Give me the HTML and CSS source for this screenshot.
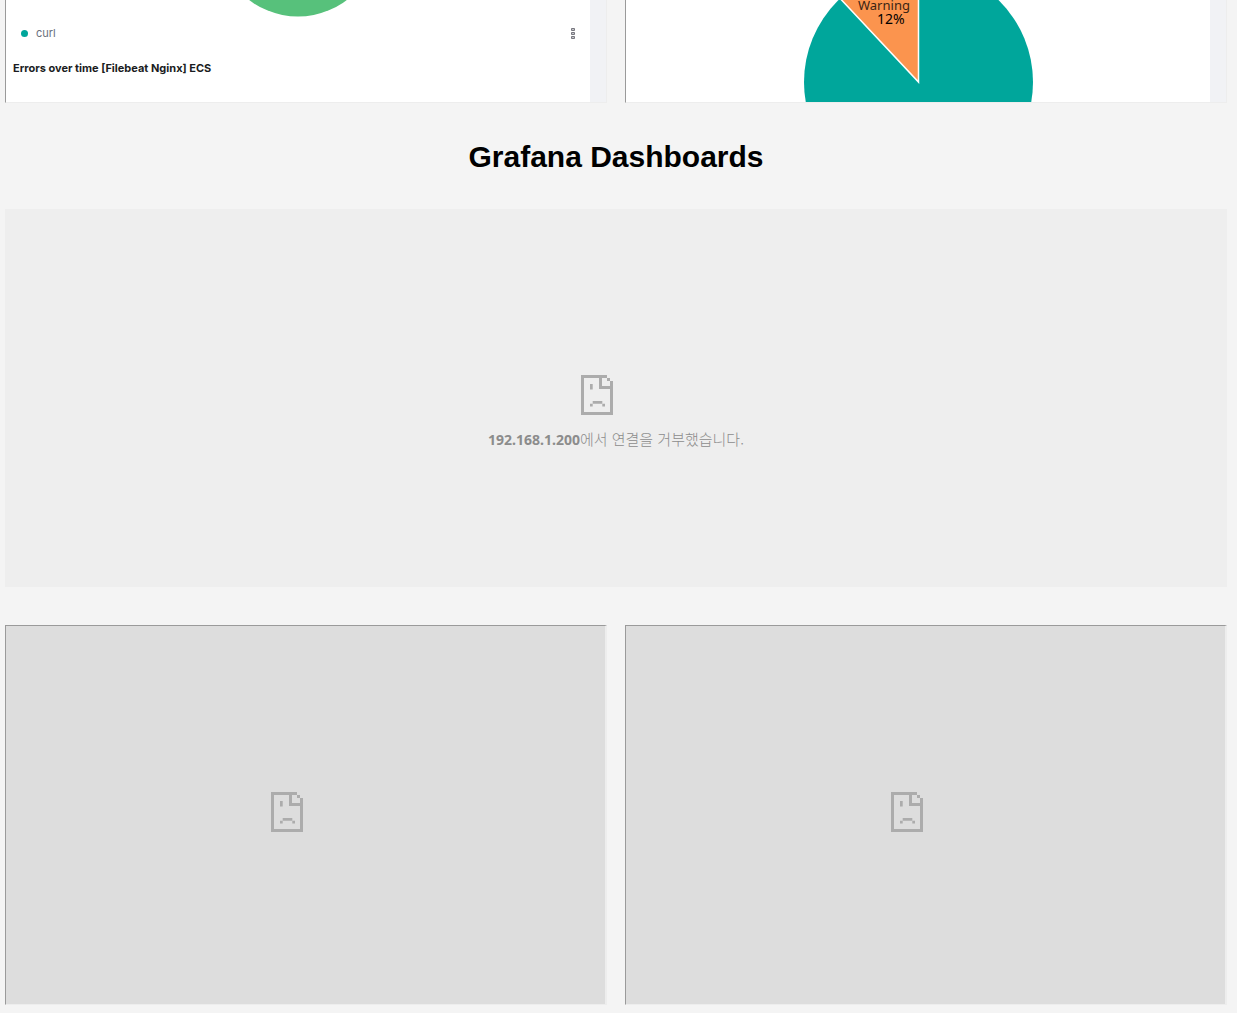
FILE: index.html
```html
<!DOCTYPE html>
<html lang="ko">
<head>
<meta charset="utf-8">
<title>Dashboards</title>
<link rel="stylesheet" href="styles.css">
</head>
<body>
<svg class="symbols" aria-hidden="true">
  <symbol id="sad-page" viewBox="0 0 32 40">
    <path d="M0 0H26V3H29V6H32V40H0ZM3 3V37H29V14H18V3ZM21 3V11H29V6H26V3Z" fill-rule="evenodd"/>
    <path d="M9 9h2.700v5.500H9zM11.700 26h9.600v2.800h-9.600zM9 28.700h2.700v2.800H9zM21.300 28.700h2.700v2.800h-2.700z"/>
  </symbol>
</svg>
<main class="page">
  <section class="row">
    <div class="frame kibana">
      <div class="kibana-body">
        <svg class="donut" viewBox="0 0 240 17" aria-hidden="true"><circle cx="120" cy="-64" r="80.5" fill="#57c17b"/></svg>
        <div class="legend">
          <span class="legend-dot"></span>
          <span class="legend-label">curl</span>
          <button class="legend-menu" type="button" aria-label="Options">
            <svg viewBox="0 0 4 11" width="4" height="11" aria-hidden="true"><path d="M.5.5h3v2h-3zM.5 4.5h3v2h-3zM.5 8.5h3v2h-3z" fill="#c4c4c8" stroke="#77777f"/></svg>
          </button>
        </div>
        <h2 class="panel-title">Errors over time [Filebeat Nginx] ECS</h2>
      </div>
    </div>
    <div class="frame kibana">
      <div class="kibana-body">
        <svg class="pie" viewBox="0 0 240 102" role="img" aria-label="Warning 12%">
          <circle cx="120.500" cy="82" r="114.500" fill="#00a69b"/>
          <path d="M120.500 82V-33A115 115 0 0 0 41.800 -1.900Z" fill="#fb944e" stroke="#fff" stroke-width="1.500"/>
          <text class="pie-label" x="60" y="10">Warning</text>
          <text class="pie-value" x="79" y="24">12%</text>
        </svg>
      </div>
    </div>
  </section>

  <h1 class="heading">Grafana Dashboards</h1>

  <section class="refused">
    <svg class="sad-icon" aria-hidden="true"><use href="#sad-page"/></svg>
    <p class="refused-text"><strong>192.168.1.200</strong>에서 연결을 거부했습니다.</p>
  </section>

  <section class="row">
    <div class="frame failed"><svg class="sad-icon" aria-hidden="true"><use href="#sad-page"/></svg></div>
    <div class="frame failed"><svg class="sad-icon" aria-hidden="true"><use href="#sad-page"/></svg></div>
  </section>
</main>
</body>
</html>
```
FILE: styles.css
```css
* {
  box-sizing: border-box;
}

body {
  margin: 0;
  background: #f4f4f4;
  color: #000;
  font-family: "Liberation Sans", Arial, sans-serif;
}

.symbols {
  display: none;
}

.page {
  padding: 0 10px 8px 5px;
}

.row {
  display: grid;
  grid-template-columns: 1fr 1fr;
  gap: 18px;
}

.frame {
  border: 1px solid #ededed;
  border-left-color: #9a9a9a;
}

.kibana {
  border-top: 0;
  padding-right: 16px;
  background: #f1f2f5;
}

.kibana-body {
  height: 100%;
  background: #fff;
  font-family: Inter, sans-serif;
}

.donut,
.pie {
  display: block;
  width: 240px;
  margin: 0 auto;
}

.legend {
  display: flex;
  align-items: center;
  height: 32px;
  padding: 0 15px;
}

.legend-dot {
  width: 7px;
  height: 7px;
  margin-right: 8px;
  border-radius: 50%;
  background: #00a69b;
}

.legend-label {
  color: #69707d;
  font-size: 11px;
  line-height: 16px;
}

.legend-menu {
  display: flex;
  margin-left: auto;
  padding: 0;
  border: 0;
  background: none;
}

.panel-title {
  margin: 0;
  padding: 11px 7px 26px;
  color: #1a1c21;
  font-size: 11px;
  font-weight: 700;
  line-height: 16px;
}

.pie-label {
  fill: #3a2414;
  font-family: "Noto Sans", sans-serif;
  font-size: 13px;
}

.pie-value {
  fill: #000;
  font-family: "Noto Sans", sans-serif;
  font-size: 14px;
}

.heading {
  margin: 0;
  padding: 37px 0 35px;
  font-size: 30px;
  line-height: 34px;
  text-align: center;
}

.refused,
.failed {
  display: flex;
  flex-direction: column;
  align-items: center;
  color: #acacac;
}

.refused {
  min-height: 378px;
  margin-bottom: 38px;
  padding-top: 166px;
  background: #eee;
}

.failed {
  min-height: 380px;
  padding-top: 166px;
  border-top-color: #9a9a9a;
  border-right-width: 2px;
  background: #ddd;
}

.sad-icon {
  width: 32px;
  height: 40px;
  margin-right: 38px;
  fill: currentColor;
}

.refused-text {
  margin: 14px 0 0;
  color: #8c8c8c;
  font-family: "Noto Sans CJK KR", sans-serif;
  font-size: 15px;
  font-weight: 300;
  line-height: 20px;
}

.refused-text strong {
  font-family: "Noto Sans", sans-serif;
  font-size: 14px;
  font-weight: 700;
}
```
